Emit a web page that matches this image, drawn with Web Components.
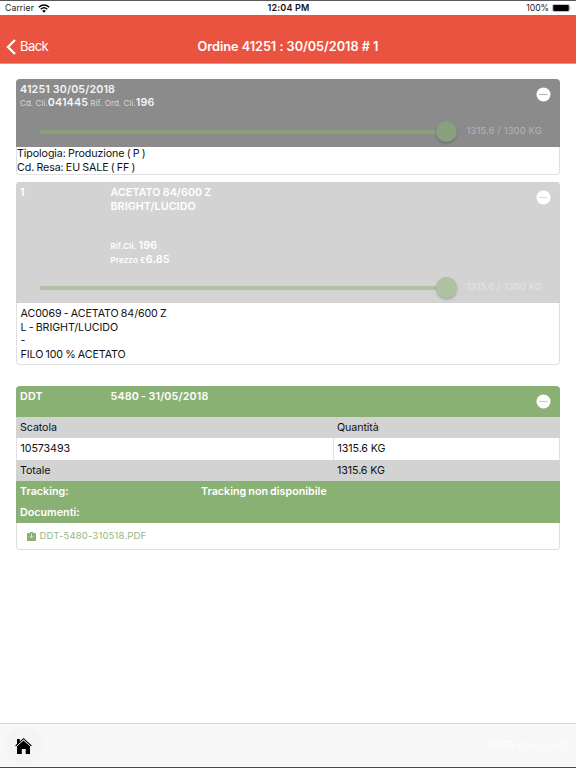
<!DOCTYPE html>
<html lang="it">
<head>
<meta charset="UTF-8">
<meta name="viewport" content="width=device-width, initial-scale=1.0">
<title>Ordine 41251</title>
<style>
    html, body { margin: 0; height: 100%; }
    body {
        --green: #8ab174;
        --light: #d3d3d3;
        --border: #e0e0e0;
        background: #fff;
        color: #111;
        font: 10.7px/13.5px Inter, "Liberation Sans", sans-serif;
        letter-spacing: -.09px;
        word-spacing: -.7px;
        overflow: hidden;
    }
</style>
</head>
<body>
<order-page>
    <status-bar slot="top" carrier="Carrier" time="12:04 PM" battery="100%"></status-bar>
    <nav-header slot="top" back="Back">Ordine 41251 : 30/05/2018 # 1</nav-header>

    <info-card style="--head: #8b8b8b; --head-height: 68px; --body-height: 27px; --body-pad: 0">
        <order-title slot="head" code="41251 30/05/2018" customer="041445" ref="196"></order-title>
        <progress-slider slot="foot" style="--track: #8a9f7e; --label: #b4b4b4">1315.6 / 1300 KG</progress-slider>
        <div>Tipologia: Produzione ( P )</div>
        <div>Cd. Resa: EU SALE ( FF )</div>
    </info-card>

    <info-card style="--head: #d3d3d3; --head-height: 121px; --body-height: 61px; --body-pad: 4px 3.5px 0; --dash: #dcdcdc; margin-top: 7px">
        <article-title slot="head" row="1" ref="196" price="6.85"><div>ACETATO 84/600 Z</div><div>BRIGHT/LUCIDO</div></article-title>
        <progress-slider slot="foot" style="--track: #aec2a2; --label: #e5e5e5">1315.6 / 1300 KG</progress-slider>
        <div>AC0069 - ACETATO 84/600 Z</div>
        <div>L - BRIGHT/LUCIDO</div>
        <div>-</div>
        <div>FILO 100 % ACETATO</div>
    </info-card>

    <info-card style="--head: #8ab174; --head-height: 31px; --body-height: 132px; --body-pad: 0; --dash: #bfd6b3; margin-top: 21px">
        <ddt-title slot="head" label="DDT">5480 - 31/05/2018</ddt-title>
        <table-row kind="shade"><span>Scatola</span><span slot="value">Quantità</span></table-row>
        <table-row kind="plain"><span>10573493</span><span slot="value">1315.6 KG</span></table-row>
        <table-row kind="shade"><span>Totale</span><span slot="value">1315.6 KG</span></table-row>
        <tracking-row label="Tracking:">Tracking non disponibile</tracking-row>
        <tracking-row label="Documenti:"></tracking-row>
        <document-link>DDT-5480-310518.PDF</document-link>
    </info-card>

    <bottom-bar slot="bottom" user="GH_LISA2"></bottom-bar>
</order-page>

<script>
// --- Base element: renders template() into an open shadow root ---
class BaseElement extends HTMLElement {
    constructor() {
        super();
        this.attachShadow({ mode: 'open' });
    }

    connectedCallback() {
        this.shadowRoot.innerHTML = this.template();
    }

    attr(name) {
        return this.getAttribute(name) || '';
    }
}

// --- Page frame ---
class OrderPage extends BaseElement {
    template() {
        return `
            <style>
                :host { display: flex; flex-direction: column; height: 100vh; box-sizing: border-box;
                    border-top: 1px solid #57575b; border-bottom: 1px solid #48484b; }
                main { flex: 1; min-height: 0; padding: 15px 16px 0; }
            </style>
            <slot name="top"></slot>
            <main><slot></slot></main>
            <slot name="bottom"></slot>
        `;
    }
}
customElements.define('order-page', OrderPage);

class StatusBar extends BaseElement {
    template() {
        return `
            <style>
                :host { display: grid; grid-template-columns: 1fr auto 1fr; align-items: center; word-spacing: 0;
                    height: 14px; padding: 0 4px 0 5px; font-size: 8.7px; line-height: 14px; color: #222; }
                .side { display: flex; align-items: center; letter-spacing: .08px; }
                .right { justify-content: flex-end; letter-spacing: -.1px; }
                b { font-weight: 600; font-size: 9px; letter-spacing: .2px; color: #111; }
                svg { display: block; }
            </style>
            <div class="side"><span>${this.attr('carrier')}</span>
                <svg style="margin-left:4px" width="12" height="9" viewBox="0 0 12 9" fill="none" stroke="#000" stroke-width="1.5">
                    <path d="M.8 3.3Q6-1.2 11.2 3.3M2.7 5.2Q6 2.4 9.3 5.2"/><path fill="#000" stroke="none" d="M6 8.7 4.1 6.8Q6 5.2 7.9 6.8Z"/>
                </svg></div>
            <b>${this.attr('time')}</b>
            <div class="side right"><span>${this.attr('battery')}</span>
                <svg style="margin-left:3px" width="20" height="8" viewBox="0 0 20 8">
                    <rect x=".4" y=".4" width="17.2" height="7.2" rx="1.6" fill="#fff" stroke="#aaa" stroke-width=".8"/>
                    <rect x="1.2" y="1.1" width="15.6" height="5.8" rx=".8"/>
                    <path d="M18.4 2.7q1.2 1.3 0 2.6z" fill="#999"/>
                </svg></div>
        `;
    }
}
customElements.define('status-bar', StatusBar);

class NavHeader extends BaseElement {
    template() {
        return `
            <style>
                :host { display: grid; grid-template-columns: 1fr auto 1fr; align-items: center; word-spacing: 0;
                    height: 49px; box-sizing: border-box; padding: 15px 6px 0; background: #eb5341; color: #fff;
                    border-bottom: 1px solid #e2968b; }
                .back { display: flex; align-items: center; gap: 4px; font-size: 13px; letter-spacing: -.55px; }
                h1 { margin: 0; font-size: 12.7px; line-height: 16px; font-weight: 600; letter-spacing: -.02px; }
            </style>
            <div class="back">
                <svg width="10" height="16" viewBox="0 0 10 16" fill="none" stroke="#fff" stroke-width="2.4"><path d="M9 1 2 8l7 7"/></svg>
                <span>${this.attr('back')}</span>
            </div>
            <h1><slot></slot></h1>
        `;
    }
}
customElements.define('nav-header', NavHeader);

// --- Cards ---
class InfoCard extends BaseElement {
    template() {
        return `
            <style>
                :host { display: block; }
                .card { border: 1px solid var(--border); border-top: 0; border-radius: 4px; }
                header { position: relative; display: flex; flex-direction: column; justify-content: space-between;
                    height: var(--head-height); box-sizing: border-box; margin: 0 -1px; padding: 4px 4px 0;
                    background: var(--head); border-radius: 4px 4px 0 0; color: #fff; }
                .body { height: var(--body-height); padding: var(--body-pad); box-sizing: border-box; }
                /* the toggle floats over the header corner */
                .toggle { position: absolute; top: 8px; right: 9px; width: 15px; height: 15px; }
            </style>
            <div class="card">
                <header>
                    <slot name="head"></slot>
                    <slot name="foot"></slot>
                    <svg class="toggle" viewBox="0 0 15 15"><circle cx="7.5" cy="7.5" r="7" fill="#fff"/><path d="M3.3 7.5h8.4" stroke="var(--dash, #b5b5b5)" stroke-width="1.2"/></svg>
                </header>
                <div class="body"><slot></slot></div>
            </div>
        `;
    }
}
customElements.define('info-card', InfoCard);

class OrderTitle extends BaseElement {
    template() {
        return `
            <style>
                :host { display: block; color: #f5f5f5; word-spacing: 0; }
                b { font-weight: 600; font-size: 10.7px; line-height: 1; letter-spacing: .15px; }
                .sub { font-size: 8px; color: #d8d8d8; letter-spacing: .06px; white-space: pre; }
                .sub b { color: #f5f5f5; }
            </style>
            <div><b>${this.attr('code')}</b></div>
            <div class="sub">Cd. Cli.<b>${this.attr('customer')}</b> Rif. Ord. Cli.<b>${this.attr('ref')}</b></div>
        `;
    }
}
customElements.define('order-title', OrderTitle);

class ArticleTitle extends BaseElement {
    template() {
        return `
            <style>
                :host { display: grid; grid-template-columns: 90.5px 1fr; font-weight: 600; letter-spacing: .08px; }
                .details { margin-top: 27px; font-size: 8px; letter-spacing: .15px; word-spacing: 0; }
                .details b { font-size: 10.8px; line-height: 1; font-weight: 600; }
            </style>
            <div>${this.attr('row')}</div>
            <div>
                <slot></slot>
                <div class="details">
                    <div>Rif.Cli. <b>${this.attr('ref')}</b></div>
                    <div>Prezzo €<b>${this.attr('price')}</b></div>
                </div>
            </div>
        `;
    }
}
customElements.define('article-title', ArticleTitle);

class ProgressSlider extends BaseElement {
    template() {
        return `
            <style>
                :host { display: flex; align-items: center; height: 31px; padding-left: 20px; }
                .track { flex: none; display: flex; align-items: center; justify-content: flex-end; width: 417px; height: 4px;
                    background: linear-gradient(var(--track), var(--track)) 0 0 / 406px 4px no-repeat; }
                .knob { width: 21px; height: 21px; border-radius: 50%; background: var(--track); box-shadow: 0 1.5px 2.5px rgba(0, 0, 0, .22); }
                .label { margin: -2px 0 0 9.5px; font-size: 9.5px; color: var(--label); letter-spacing: .1px; word-spacing: 0; white-space: nowrap; }
            </style>
            <div class="track"><div class="knob"></div></div>
            <div class="label"><slot></slot></div>
        `;
    }
}
customElements.define('progress-slider', ProgressSlider);

class DdtTitle extends BaseElement {
    template() {
        return `
            <style>
                :host { display: grid; grid-template-columns: 90.5px 1fr; font-weight: 600; letter-spacing: .18px; }
            </style>
            <div>${this.attr('label')}</div>
            <div><slot></slot></div>
        `;
    }
}
customElements.define('ddt-title', DdtTitle);

// --- DDT table ---
class TableRow extends BaseElement {
    template() {
        return `
            <style>
                :host { display: grid; grid-template-columns: 317px 1fr; height: 21px; margin: 0 -1px; line-height: 21px; word-spacing: 0; }
                :host([kind="shade"]) { background: var(--light); }
                :host([kind="plain"]) { height: 22px; margin: 0; line-height: 22px; }
                div { padding-left: 4px; }
                :host([kind="plain"]) div { padding-left: 3.5px; }
                :host([kind="plain"]) div + div { border-left: 1px solid var(--border); margin-left: -1px; }
            </style>
            <div><slot></slot></div>
            <div><slot name="value"></slot></div>
        `;
    }
}
customElements.define('table-row', TableRow);

class TrackingRow extends BaseElement {
    template() {
        return `
            <style>
                :host { display: grid; grid-template-columns: 181px 1fr; height: 21px; margin: 0 -1px; padding-left: 4px;
                    line-height: 21px; background: var(--green); color: #fff; font-weight: 600; letter-spacing: .03px; }
            </style>
            <div>${this.attr('label')}</div>
            <div><slot></slot></div>
        `;
    }
}
customElements.define('tracking-row', TrackingRow);

class DocumentLink extends BaseElement {
    template() {
        return `
            <style>
                :host { display: flex; align-items: center; gap: 3.5px; height: 26px; padding-left: 10px;
                    color: #94b782; font-size: 9.6px; letter-spacing: .12px; }
            </style>
            <svg width="9" height="9" viewBox="0 0 9 9"><path fill="#8ab174" d="M0 1h3V0h3v1h3v8H0z"/><path d="M4.5 1.5v4M2.9 4.2l1.6 1.6 1.6-1.6" fill="none" stroke="#e6f0e1" stroke-width=".8"/></svg>
            <span><slot></slot></span>
        `;
    }
}
customElements.define('document-link', DocumentLink);

class BottomBar extends BaseElement {
    template() {
        return `
            <style>
                :host { display: flex; align-items: center; justify-content: space-between; height: 44px; box-sizing: border-box;
                    border-top: 1px solid #d8d8d8; padding: 0 5px 0 5px; background: #f7f7f7; color: #fdfdfd; }
                .home { display: grid; place-items: center; width: 38px; height: 35px; border-radius: 50%; background: #f4f4f4; }
                .user { font-size: 10.7px; letter-spacing: -.2px; }
                b { font-weight: 600; }
                svg { margin-left: -2px; }
            </style>
            <div class="home">
                <svg width="17" height="18" viewBox="0 0 17 18">
                    <path d="M2 2h2.8v3.4L2 8zM8.5 3.2 15 9v8h-4.3v-5H6.8v5H2V9z"/>
                    <path d="M.6 9 8.5 1.7 16.4 9" fill="none" stroke="#000" stroke-width="1.1"/>
                    <path d="M1.3 9.6 8.5 3l7.2 6.6" fill="none" stroke="#ddd" stroke-width=".8"/>
                </svg>
            </div>
            <div class="user"><b>USER :</b> ${this.attr('user')}</div>
        `;
    }
}
customElements.define('bottom-bar', BottomBar);
</script>
</body>
</html>
